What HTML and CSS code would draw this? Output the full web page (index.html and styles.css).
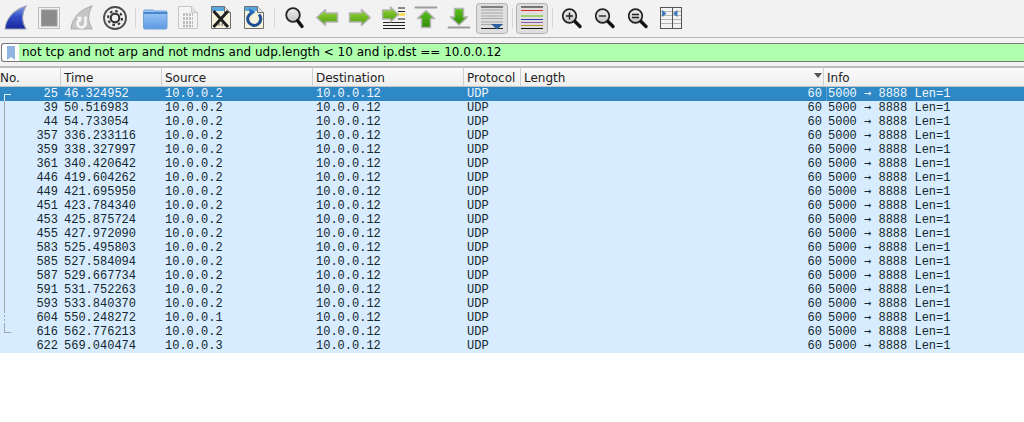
FILE: index.html
```html
<!DOCTYPE html>
<html lang="en">
<head>
<meta charset="utf-8">
<title>Wireshark</title>
<link rel="stylesheet" href="styles.css">
</head>
<body>
<div class="toolbar">
  <svg class="ic" viewBox="0 0 33 37"><defs>
    <linearGradient id="sh" x1="0" y1="0" x2="0" y2="1"><stop offset="0" stop-color="#7f9fe8"/><stop offset=".45" stop-color="#3350c8"/><stop offset="1" stop-color="#16259c"/></linearGradient>
    <linearGradient id="gr" x1="0" y1="0" x2="0" y2="1"><stop offset="0" stop-color="#9ad83c"/><stop offset="1" stop-color="#4c9a0e"/></linearGradient>
    <linearGradient id="gv" x1="0" y1="0" x2="0" y2="1"><stop offset="0" stop-color="#5cc41e"/><stop offset="1" stop-color="#2f8a08"/></linearGradient>
    <linearGradient id="fo" x1="0" y1="0" x2="0" y2="1"><stop offset="0" stop-color="#a0ccf8"/><stop offset="1" stop-color="#5e98e2"/></linearGradient>
    <linearGradient id="le" x1="0" y1="0" x2="0" y2="1"><stop offset="0" stop-color="#eeeeee"/><stop offset="1" stop-color="#c4c4c4"/></linearGradient>
  </defs><path d="M5 29C6 19 13 10 26 6C22 13 21 21 26 29Z" fill="url(#sh)" stroke="#9aa0b4" stroke-width="1.100"/></svg>
  <svg class="ic" viewBox="0 0 33 37"><rect x="5.500" y="7.500" width="21" height="21" fill="#f2f2f2" stroke="#bdbdbd"/><rect x="8.500" y="10" width="15.500" height="16" fill="#8c8c8c" stroke="#9c9c9c"/></svg>
  <svg class="ic" viewBox="0 0 33 37"><path d="M5 29C6 19 13 10 26 6C22 13 21 21 26 29Z" fill="#c6c6c6" stroke="#b0b0b0" stroke-width="1.100"/><path d="M19.500 16.500v7a4 4 0 1 1-6-3.500" fill="none" stroke="#f6f6f6" stroke-width="2.600"/><path d="M10.500 16.500l5.500 .5-1.500 5.500Z" fill="#f6f6f6"/></svg>
  <svg class="ic" viewBox="0 0 33 37"><circle cx="16" cy="18" r="11" fill="#f0f0f0" stroke="#4a4a4a" stroke-width="1.800"/><circle cx="16" cy="18" r="7" fill="none" stroke="#333" stroke-width="2" stroke-dasharray="2.600 2.900"/><circle cx="16" cy="18" r="4.300" fill="#f0f0f0" stroke="#333" stroke-width="2.200"/></svg>
  <span class="sep"></span>
  <svg class="ic" viewBox="0 0 33 37"><path d="M4.500 11.500q0-1.500 1.500-1.500h8l1 1h12q1 0 1 1v15.500q0 1.500-1.500 1.500H6q-1.500 0-1.500-1.500Z" fill="url(#fo)" stroke="#6d9fd8"/><path d="M5 13h23" stroke="#2f70c0" stroke-width="1.500"/></svg>
  <svg class="ic" viewBox="0 0 33 37"><path d="M6.500 6.500h13l6 6v16h-19Z" fill="#f4f4f4" stroke="#c6c6c6"/><path d="M19.500 6.500v6h6" fill="#e2e2e2" stroke="#c6c6c6"/><path d="M11 14.500h10M11 18.500h10M11 22.500h10M11 26h10" stroke="#b4b4b4" stroke-width="2.400" stroke-dasharray="2 1"/></svg>
  <svg class="ic" viewBox="0 0 33 37"><path d="M6.500 6.500h13l6 6v16h-19Z" fill="#f6f3dc" stroke="#6e7072"/><path d="M7 7h12l1 4H7Z" fill="#58a8e0"/><path d="M19.500 6.500v6h6" fill="#e6e6e6" stroke="#6e7072"/><path d="M10 24.500h11" stroke="#9a9a88" stroke-width="2.400" stroke-dasharray="2 1"/><path d="M8.500 11l14.500 16M23 11L8.500 27" stroke="#202020" stroke-width="3"/></svg>
  <svg class="ic" viewBox="0 0 33 37"><path d="M6.500 6.500h13l6 6v16h-19Z" fill="#f6f3dc" stroke="#6e7072"/><path d="M7 7h12l1 4H7Z" fill="#58a8e0"/><path d="M19.500 6.500v6h6" fill="#e6e6e6" stroke="#6e7072"/><path d="M21 14.500a6.500 6.500 0 1 1-7.500-1.500" fill="none" stroke="#1e4f94" stroke-width="3"/><path d="M11 8.500l6.500 3.500-5.500 4Z" fill="#2a6cb8"/></svg>
  <span class="sep"></span>
  <svg class="ic" viewBox="0 0 33 37"><circle cx="15" cy="15" r="6.800" fill="url(#le)" stroke="#222" stroke-width="1.800"/><path d="M19.500 20.500L24 26.500" stroke="#111" stroke-width="3.400" stroke-linecap="round"/></svg>
  <svg class="ic" viewBox="0 0 33 37"><path d="M5.700 17.500l8.800-8v3.500h12v9h-12v3.500Z" fill="url(#gr)" stroke="#b4b4b4" stroke-width="1.500" stroke-linejoin="round"/></svg>
  <svg class="ic" viewBox="0 0 33 37"><path d="M26.300 17.500l-8.800-8v3.500h-12v9h12v3.500Z" fill="url(#gr)" stroke="#b4b4b4" stroke-width="1.500" stroke-linejoin="round"/></svg>
  <svg class="ic" viewBox="0 0 33 37"><path d="M21 8h7M21 11.500h7M21 19h7M6 22.500h22M6 25.500h22M6 28.500h22" stroke="#222" stroke-width="1"/><path d="M22 14.500h6" stroke="#f5dc40" stroke-width="2.400"/><path d="M21.500 14.500l-8-7.500v3H5.500v9H13.500v3Z" fill="url(#gr)" stroke="#b4b4b4" stroke-width="1.300" stroke-linejoin="round"/></svg>
  <svg class="ic" viewBox="0 0 33 37"><path d="M5.500 7.500h21" stroke="#9c9c9c" stroke-width="1.800" stroke-linecap="round"/><path d="M16 10.500l8.500 8H20.500v9h-9v-9H7.500Z" fill="url(#gv)" stroke="#b4b4b4" stroke-width="1.500" stroke-linejoin="round"/></svg>
  <svg class="ic" viewBox="0 0 33 37"><path d="M5.500 27.500h21" stroke="#9c9c9c" stroke-width="1.800" stroke-linecap="round"/><path d="M16 25l8.500-8H20.500V8.500h-9V17H7.500Z" fill="url(#gv)" stroke="#b4b4b4" stroke-width="1.500" stroke-linejoin="round"/></svg>
  <svg class="ic" viewBox="0 0 33 37"><rect x=".500" y="3.500" width="31" height="30" rx="3" fill="#dedede" stroke="#b2b2b2"/><path d="M5 10h22M5 13h22M5 16h22M5 18.500h22M5 22h22M5 24.500h22" stroke="#a8a8a8" stroke-width="1"/><path d="M5 7h22M5 28.500h22" stroke="#222" stroke-width="1"/><path d="M15 24h12l-6 5.500Z" fill="#2f5f9f"/></svg>
  <span class="sep"></span>
  <svg class="ic" viewBox="0 0 33 37"><rect x=".500" y="3.500" width="31" height="30" rx="3" fill="#dedede" stroke="#b2b2b2"/><path d="M5 7h22" stroke="#111"/><path d="M5 10.500h22" stroke="#e02828"/><path d="M5 16h22" stroke="#64c800"/><path d="M5 19.500h22" stroke="#2c3cb0"/><path d="M5 22.500h22" stroke="#8c5aa8"/><path d="M5 25.500h22" stroke="#b8962a"/><path d="M5 28.500h22" stroke="#111"/></svg>
  <span class="sep"></span>
  <svg class="ic" viewBox="0 0 33 37"><circle cx="13.500" cy="16" r="6.800" fill="url(#le)" stroke="#222" stroke-width="1.700"/><path d="M10 16h7M13.500 12.500v7" stroke="#222" stroke-width="1.400"/><path d="M19 21.500l5 5" stroke="#111" stroke-width="3.400" stroke-linecap="round"/></svg>
  <svg class="ic" viewBox="0 0 33 37"><circle cx="13.500" cy="16" r="6.800" fill="url(#le)" stroke="#222" stroke-width="1.700"/><path d="M10 16h7" stroke="#222" stroke-width="1.400"/><path d="M19 21.500l5 5" stroke="#111" stroke-width="3.400" stroke-linecap="round"/></svg>
  <svg class="ic" viewBox="0 0 33 37"><circle cx="13.500" cy="16" r="6.800" fill="url(#le)" stroke="#222" stroke-width="1.700"/><path d="M10 14.500h7M10 17.500h7" stroke="#222" stroke-width="1.400"/><path d="M19 21.500l5 5" stroke="#111" stroke-width="3.400" stroke-linecap="round"/></svg>
  <svg class="ic" viewBox="0 0 33 37"><path d="M5 7.500h22M5 28.500h22" stroke="#555"/><path d="M5 11.500h22M5 15.500h22M5 19.500h22M5 23.500h22" stroke="#b4b4b4"/><path d="M5.500 7v22M17.500 7v22M26.500 7v22" stroke="#555"/><path d="M7 10l4.500 3.500L7 17ZM22.500 10L18 13.500l4.500 3.500Z" fill="#3a78c0"/></svg>
</div>
<div class="filter">
  <span class="bookmark"><svg width="8" height="14" viewBox="0 0 8 14"><path d="M0 0h8v14l-4-3-4 3Z" fill="#8fb5e0"/></svg></span>
  <span class="filter-text">not tcp and not arp and not mdns and udp.length &lt; 10 and ip.dst == 10.0.0.12</span>
</div>
<div class="packets">
  <div class="row head">
    <span class="c no">No.</span><span class="c time">Time</span><span class="c src">Source</span><span class="c dst">Destination</span><span class="c proto">Protocol</span><span class="c len">Length<i class="sort"></i></span><span class="c info">Info</span>
  </div>
  <div class="row sel"><span class="c no">25</span><span class="c time">46.324952</span><span class="c src">10.0.0.2</span><span class="c dst">10.0.0.12</span><span class="c proto">UDP</span><span class="c len">60</span><span class="c info">5000 <b class="arr">→</b> 8888 Len=1</span><i class="rel first"></i></div>
  <div class="row"><span class="c no">39</span><span class="c time">50.516983</span><span class="c src">10.0.0.2</span><span class="c dst">10.0.0.12</span><span class="c proto">UDP</span><span class="c len">60</span><span class="c info">5000 <b class="arr">→</b> 8888 Len=1</span><i class="rel"></i></div>
  <div class="row"><span class="c no">44</span><span class="c time">54.733054</span><span class="c src">10.0.0.2</span><span class="c dst">10.0.0.12</span><span class="c proto">UDP</span><span class="c len">60</span><span class="c info">5000 <b class="arr">→</b> 8888 Len=1</span><i class="rel"></i></div>
  <div class="row"><span class="c no">357</span><span class="c time">336.233116</span><span class="c src">10.0.0.2</span><span class="c dst">10.0.0.12</span><span class="c proto">UDP</span><span class="c len">60</span><span class="c info">5000 <b class="arr">→</b> 8888 Len=1</span><i class="rel"></i></div>
  <div class="row"><span class="c no">359</span><span class="c time">338.327997</span><span class="c src">10.0.0.2</span><span class="c dst">10.0.0.12</span><span class="c proto">UDP</span><span class="c len">60</span><span class="c info">5000 <b class="arr">→</b> 8888 Len=1</span><i class="rel"></i></div>
  <div class="row"><span class="c no">361</span><span class="c time">340.420642</span><span class="c src">10.0.0.2</span><span class="c dst">10.0.0.12</span><span class="c proto">UDP</span><span class="c len">60</span><span class="c info">5000 <b class="arr">→</b> 8888 Len=1</span><i class="rel"></i></div>
  <div class="row"><span class="c no">446</span><span class="c time">419.604262</span><span class="c src">10.0.0.2</span><span class="c dst">10.0.0.12</span><span class="c proto">UDP</span><span class="c len">60</span><span class="c info">5000 <b class="arr">→</b> 8888 Len=1</span><i class="rel"></i></div>
  <div class="row"><span class="c no">449</span><span class="c time">421.695950</span><span class="c src">10.0.0.2</span><span class="c dst">10.0.0.12</span><span class="c proto">UDP</span><span class="c len">60</span><span class="c info">5000 <b class="arr">→</b> 8888 Len=1</span><i class="rel"></i></div>
  <div class="row"><span class="c no">451</span><span class="c time">423.784340</span><span class="c src">10.0.0.2</span><span class="c dst">10.0.0.12</span><span class="c proto">UDP</span><span class="c len">60</span><span class="c info">5000 <b class="arr">→</b> 8888 Len=1</span><i class="rel"></i></div>
  <div class="row"><span class="c no">453</span><span class="c time">425.875724</span><span class="c src">10.0.0.2</span><span class="c dst">10.0.0.12</span><span class="c proto">UDP</span><span class="c len">60</span><span class="c info">5000 <b class="arr">→</b> 8888 Len=1</span><i class="rel"></i></div>
  <div class="row"><span class="c no">455</span><span class="c time">427.972090</span><span class="c src">10.0.0.2</span><span class="c dst">10.0.0.12</span><span class="c proto">UDP</span><span class="c len">60</span><span class="c info">5000 <b class="arr">→</b> 8888 Len=1</span><i class="rel"></i></div>
  <div class="row"><span class="c no">583</span><span class="c time">525.495803</span><span class="c src">10.0.0.2</span><span class="c dst">10.0.0.12</span><span class="c proto">UDP</span><span class="c len">60</span><span class="c info">5000 <b class="arr">→</b> 8888 Len=1</span><i class="rel"></i></div>
  <div class="row"><span class="c no">585</span><span class="c time">527.584094</span><span class="c src">10.0.0.2</span><span class="c dst">10.0.0.12</span><span class="c proto">UDP</span><span class="c len">60</span><span class="c info">5000 <b class="arr">→</b> 8888 Len=1</span><i class="rel"></i></div>
  <div class="row"><span class="c no">587</span><span class="c time">529.667734</span><span class="c src">10.0.0.2</span><span class="c dst">10.0.0.12</span><span class="c proto">UDP</span><span class="c len">60</span><span class="c info">5000 <b class="arr">→</b> 8888 Len=1</span><i class="rel"></i></div>
  <div class="row"><span class="c no">591</span><span class="c time">531.752263</span><span class="c src">10.0.0.2</span><span class="c dst">10.0.0.12</span><span class="c proto">UDP</span><span class="c len">60</span><span class="c info">5000 <b class="arr">→</b> 8888 Len=1</span><i class="rel"></i></div>
  <div class="row"><span class="c no">593</span><span class="c time">533.840370</span><span class="c src">10.0.0.2</span><span class="c dst">10.0.0.12</span><span class="c proto">UDP</span><span class="c len">60</span><span class="c info">5000 <b class="arr">→</b> 8888 Len=1</span><i class="rel"></i></div>
  <div class="row"><span class="c no">604</span><span class="c time">550.248272</span><span class="c src">10.0.0.1</span><span class="c dst">10.0.0.12</span><span class="c proto">UDP</span><span class="c len">60</span><span class="c info">5000 <b class="arr">→</b> 8888 Len=1</span><i class="rel dash"></i></div>
  <div class="row"><span class="c no">616</span><span class="c time">562.776213</span><span class="c src">10.0.0.2</span><span class="c dst">10.0.0.12</span><span class="c proto">UDP</span><span class="c len">60</span><span class="c info">5000 <b class="arr">→</b> 8888 Len=1</span><i class="rel last"></i></div>
  <div class="row"><span class="c no">622</span><span class="c time">569.040474</span><span class="c src">10.0.0.3</span><span class="c dst">10.0.0.12</span><span class="c proto">UDP</span><span class="c len">60</span><span class="c info">5000 <b class="arr">→</b> 8888 Len=1</span></div>
</div>
</body>
</html>
```
FILE: styles.css
```css
* { box-sizing: border-box; }
html, body { margin: 0; padding: 0; background: #fff; overflow: hidden; }
body { width: 1024px; height: 422px; }
.toolbar {
  height: 38px; background: #f2f2f2; border-bottom: 1px solid #b9b9b9;
  display: flex; align-items: flex-start;
}
.ic { width: 33px; height: 37px; flex: none; display: block; }
.sep { width: 7px; height: 37px; flex: none; position: relative; }
.sep::after {
  content: ""; position: absolute; left: 3px; top: 8px; width: 1px; height: 20px; background: #d6d6d6;
}
.filter {
  height: 28px; background: #f2f2f2; padding: 5px 0 4px 1px; display: flex;
}
.bookmark {
  width: 18px; height: 19px; background: #fff; border: 1px solid #777; border-right: 0; border-radius: 3px 0 0 3px;
  display: flex; justify-content: center; align-items: center; flex: none;
}
.filter-text {
  flex: 1; height: 19px; background: #afffaf; border: solid #777; border-width: 1px 0;
  font: 12px/17px "DejaVu Sans", sans-serif; color: #000; padding-left: 3px;
}
.packets { border-top: 2px solid #bdbdbd; position: relative; }
.row {
  height: 14px; display: flex; background: #d8ecff; color: #12272e;
  font: 12px/14px "Liberation Mono", monospace; position: relative; white-space: pre;
}
.row.sel { background: #2e88c6; color: #f2f8fc; }
.row.head {
  height: 19px; background: linear-gradient(#fbfbfb, #eeeeee); color: #222;
  font: 12px/20px "DejaVu Sans", sans-serif; border-bottom: 1px solid #c4c4c4;
}
.c { display: block; flex: none; padding-left: 3px; overflow: hidden; }
.head .c { border-right: 1px solid #cfcfcf; position: relative; }
.no { width: 61px; text-align: right; padding: 0 3px 0 0; }
.head .no { text-align: left; padding: 0; }
.time { width: 101px; }
.src { width: 151px; }
.dst { width: 151px; }
.proto { width: 57px; }
.len { width: 303px; text-align: right; padding: 0 2px 0 0; }
.head .len { text-align: left; padding-left: 3px; }
.info { flex: 1; padding-left: 4px; }
.head .info { border-right: 0; padding-left: 3px; }
.sel .info { background: linear-gradient(#5fa3d3, #5fa3d3) 2px 0 / 1px 100% no-repeat; }
.arr { font: 12px/0 "DejaVu Sans Mono", monospace; }
.sort {
  position: absolute; right: 1px; top: 5px; width: 0; height: 0;
  border: solid transparent; border-width: 5px 4px 0; border-top-color: #555;
}
.rel { position: absolute; left: 4px; top: 0; bottom: 0; width: 1px; background: #9fa9b0; }
.rel.first { background: none; border-left: 1px solid #e8f2f8; border-top: 1px solid #e8f2f8; width: 7px; top: 7px; }
.rel.dash { background: repeating-linear-gradient(#9fa9b0 0 2px, transparent 2px 4px); }
.rel.last { background: none; border-left: 1px solid #9fa9b0; border-bottom: 1px solid #9fa9b0; width: 7px; bottom: 6px; }
```
